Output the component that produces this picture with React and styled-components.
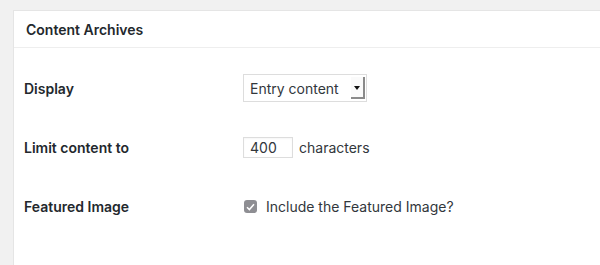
import React from "react";
import styled, { createGlobalStyle } from "styled-components";

const GlobalStyle = createGlobalStyle`
  html, body {
    margin: 0;
    padding: 0;
    background: #f1f1f1;
    overflow: hidden;
  }
  body {
    font-family: Inter, "Liberation Sans", sans-serif;
    font-size: 14px;
    color: #23282d;
    -webkit-font-smoothing: antialiased;
  }
`;

const Page = styled.div`
  width: 600px;
  height: 265px;
  padding: 10px 0 0 13px;
  box-sizing: border-box;
  display: flex;
  flex-direction: column;
`;

const Panel = styled.section`
  flex: 1;
  background: #fff;
  border: 1px solid #e5e5e5;
  border-right: none;
  border-bottom: none;
`;

const PanelHeader = styled.h2`
  margin: 0;
  height: 36px;
  padding-left: 12px;
  display: flex;
  align-items: center;
  font-size: 14px;
  font-weight: 600;
  border-bottom: 1px solid #eee;
`;

const FormTable = styled.div`
  display: grid;
  grid-template-columns: 219px 1fr;
  grid-template-rows: 60px 59px 59px;
  align-items: center;
  padding: 10px 0 0 10px;
`;

const Label = styled.label`
  font-weight: 600;
  font-size: 14px;
  color: #23282d;
`;

const Field = styled.div`
  display: flex;
  align-items: center;
  gap: 6px;
  color: #32373c;
`;

const Select = styled.div`
  width: 124px;
  height: 28px;
  box-sizing: border-box;
  border: 1px solid #ddd;
  display: flex;
  align-items: center;
  justify-content: space-between;
  padding-left: 6px;
  background: #fff;
`;

const Arrow = styled.span`
  width: 14px;
  height: 22px;
  margin-right: 1px;
  display: flex;
  align-items: center;
  justify-content: center;
  background: #fafafa;
  box-shadow: inset -2px -2px 0 #8a8a8a;
  &::after {
    content: "";
    border-left: 3px solid transparent;
    border-right: 3px solid transparent;
    border-top: 4px solid #111;
    margin-right: 2px;
  }
`;

const NumberInput = styled.div`
  width: 50px;
  height: 21px;
  box-sizing: border-box;
  border: 1px solid #ddd;
  box-shadow: inset 0 1px 2px rgba(0, 0, 0, 0.04);
  padding-left: 6px;
  display: flex;
  align-items: center;
`;

const Check = styled.span`
  width: 13px;
  height: 13px;
  border-radius: 3px;
  background: #8e8e93;
  display: flex;
  align-items: center;
  justify-content: center;
  margin-left: 1px;
  margin-right: 3px;
`;

const App = () => (
  <>
    <GlobalStyle />
    <Page>
      <Panel>
        <PanelHeader>Content Archives</PanelHeader>
        <FormTable>
          <Label>Display</Label>
          <Field>
            <Select>
              Entry content
              <Arrow />
            </Select>
          </Field>

          <Label>Limit content to</Label>
          <Field>
            <NumberInput>400</NumberInput>
            characters
          </Field>

          <Label>Featured Image</Label>
          <Field>
            <Check>
              <svg width="9" height="8" viewBox="0 0 9 8">
                <path
                  d="M1 4.2 L3.4 6.6 L8 1.2"
                  fill="none"
                  stroke="#fff"
                  strokeWidth="1.5"
                />
              </svg>
            </Check>
            Include the Featured Image?
          </Field>
        </FormTable>
      </Panel>
    </Page>
  </>
);

export default App;
